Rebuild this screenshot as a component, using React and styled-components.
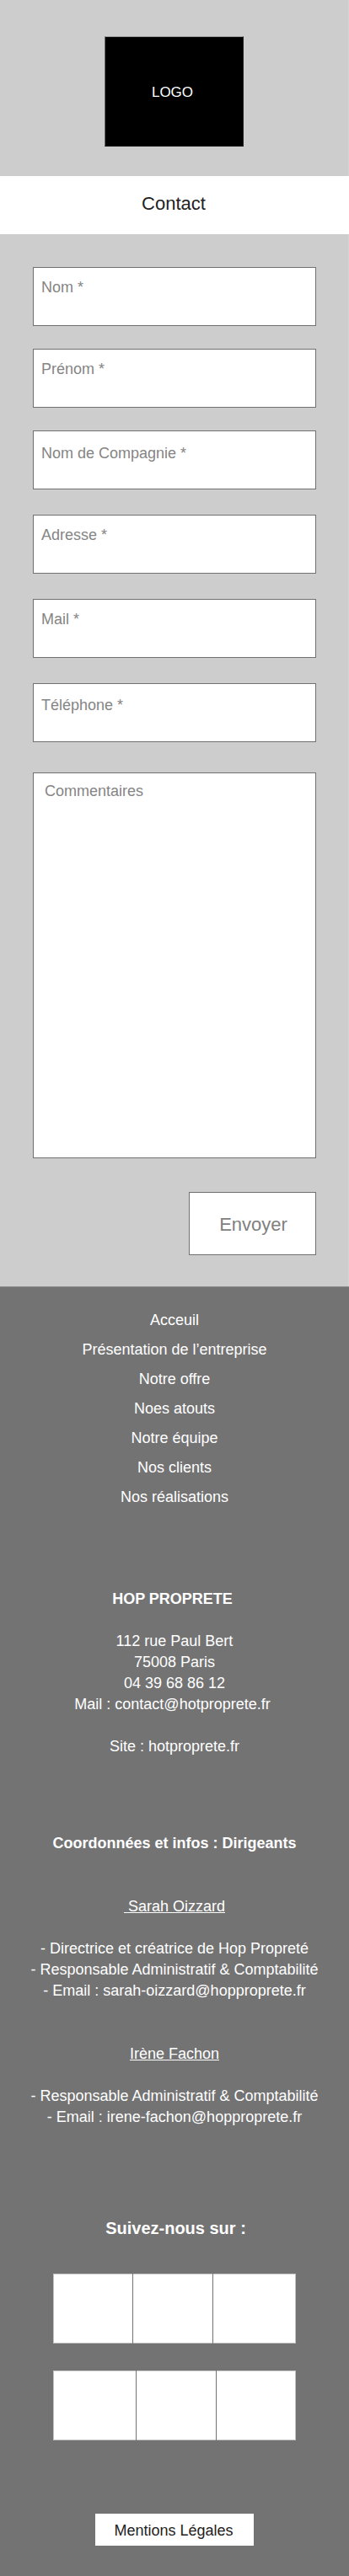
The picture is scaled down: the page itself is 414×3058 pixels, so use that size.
import React from "react";
import styled, { createGlobalStyle } from "styled-components";

const GlobalStyle = createGlobalStyle`
  *, *::before, *::after { box-sizing: border-box; }
  body {
    margin: 0;
    background: #737373;
    font-family: "Liberation Sans", Arial, Helvetica, sans-serif;
    font-size: 18px;
    line-height: 25px;
  }
  h1, h2, h3, p, ul { margin: 0; padding: 0; font-size: inherit; font-weight: inherit; }
`;

const Page = styled.div`
  width: 414px;
  height: 3058px;
  display: flex;
  flex-direction: column;
  background: #737373;
`;

const Header = styled.header`
  height: 209px;
  padding-top: 43px;
  background: #cdcdcd;
  border-right: 1px solid #d5d5d5;
`;

const Logo = styled.div`
  width: 165px;
  height: 131px;
  margin-left: 124px;
  padding: 53px 4px 0 0;
  background: #000;
  border: 1px solid #231f20;
  border-top-color: #999;
  border-left-color: #666;
  color: #fff;
  font-size: 17px;
  text-align: center;
`;

const TitleBar = styled.h1`
  height: 69px;
  padding: 20px 2px 0 0;
  background: #fff;
  color: #222;
  font-size: 22px;
  line-height: 26px;
  text-align: center;
`;

const Form = styled.form`
  height: 1249px;
  padding: 39px 38px 0 39px;
  background: #cdcdcd;
  border-right: 1px solid #d5d5d5;
  display: flex;
  flex-direction: column;
`;

const Field = styled.label`
  display: block;
  flex: none;
  height: ${(p) => p.$height || 70}px;
  margin-bottom: ${(p) => p.$gap}px;
  padding: ${(p) => p.$top || 11}px 0 0 ${(p) => p.$left || 9}px;
  background: #fff;
  border: 1px solid #707070;
  color: #858585;
`;

const Submit = styled.button`
  align-self: flex-end;
  width: 151px;
  height: 75px;
  padding: 2px 0 0 2px;
  background: #fff;
  border: 1px solid #707070;
  color: #808080;
  font: 22px/26px "Liberation Sans", Arial, sans-serif;
`;

const Footer = styled.footer`
  flex: 1;
  border-top: 1px solid #8e8e8e;
  padding-top: 22px;
  color: #fff;
  text-align: center;
`;

const Nav = styled.ul`
  list-style: none;
  line-height: 35px;
  margin-bottom: 91px;
`;

const Block = styled.section`
  margin-bottom: ${(p) => p.$gap}px;
`;

const Heading = styled.h2`
  font-weight: bold;
  margin-bottom: ${(p) => p.$gap}px;
  white-space: pre;
`;

const Line = styled.p`
  white-space: pre;
  margin-top: ${(p) => p.$before || 0}px;
`;

const Name = styled.h3`
  text-decoration: underline;
  margin-bottom: 25px;
`;

const Follow = styled.h2`
  font-size: 20px;
  font-weight: bold;
  padding-left: 3px;
  margin-bottom: 41px;
`;

const Tiles = styled.div`
  display: grid;
  grid-template-columns: ${(p) => p.$columns};
  column-gap: 1px;
  width: 288px;
  height: 83px;
  margin: 0 0 ${(p) => p.$gap}px 63px;
`;

const Tile = styled.div`
  background: #fff;
  border: solid #c4c4c4;
  border-width: 1px 0;
  &:first-child { border-left-width: 1px; }
  &:last-child { border-right-width: 1px; }
`;

const Legal = styled.div`
  width: 188px;
  height: 38px;
  margin-left: 113px;
  padding: 8px 2px 0 0;
  background: #fff;
  color: #222;
`;

const fields = [
  { label: "Nom *", gap: 27 },
  { label: "Prénom *", gap: 27 },
  { label: "Nom de Compagnie *", gap: 30, top: 14 },
  { label: "Adresse *", gap: 30 },
  { label: "Mail *", gap: 30 },
  { label: "Téléphone *", gap: 36, top: 13 },
  { label: "Commentaires", gap: 40, top: 9, left: 13, height: 458 },
];

const links = [
  "Acceuil",
  "Présentation de l’entreprise",
  "Notre offre",
  "Noes atouts",
  "Notre équipe",
  "Nos clients",
  "Nos réalisations",
];

export default function App() {
  return (
    <>
      <GlobalStyle />
      <Page>
        <Header>
          <Logo>LOGO</Logo>
        </Header>
        <TitleBar>Contact</TitleBar>
        <Form>
          {fields.map((f) => (
            <Field key={f.label} $gap={f.gap} $top={f.top} $left={f.left} $height={f.height}>
              {f.label}
            </Field>
          ))}
          <Submit type="button">Envoyer</Submit>
        </Form>
        <Footer>
          <Nav>
            {links.map((l) => (
              <li key={l}>{l}</li>
            ))}
          </Nav>
          <Block $gap={90}>
            <Heading $gap={25}>{"HOP PROPRETE "}</Heading>
            <Line>112 rue Paul Bert</Line>
            <Line>75008 Paris</Line>
            <Line>04 39 68 86 12</Line>
            <Line>{"Mail : contact@hotproprete.fr "}</Line>
            <Line $before={25}>Site : hotproprete.fr</Line>
          </Block>
          <Block $gap={50}>
            <Heading $gap={50}>Coordonnées et infos : Dirigeants</Heading>
            <Name>&nbsp;Sarah Oizzard</Name>
            <Line>- Directrice et créatrice de Hop Propreté</Line>
            <Line>- Responsable Administratif &amp; Comptabilité</Line>
            <Line>- Email : sarah-oizzard@hopproprete.fr</Line>
          </Block>
          <Block $gap={107}>
            <Name>Irène Fachon</Name>
            <Line>- Responsable Administratif &amp; Comptabilité</Line>
            <Line>- Email : irene-fachon@hopproprete.fr</Line>
          </Block>
          <Follow>Suivez-nous sur :</Follow>
          <Tiles $columns="94px 94px 98px" $gap={32}>
            <Tile />
            <Tile />
            <Tile />
          </Tiles>
          <Tiles $columns="98px 94px 94px" $gap={87}>
            <Tile />
            <Tile />
            <Tile />
          </Tiles>
          <Legal>Mentions Légales</Legal>
        </Footer>
      </Page>
    </>
  );
}
